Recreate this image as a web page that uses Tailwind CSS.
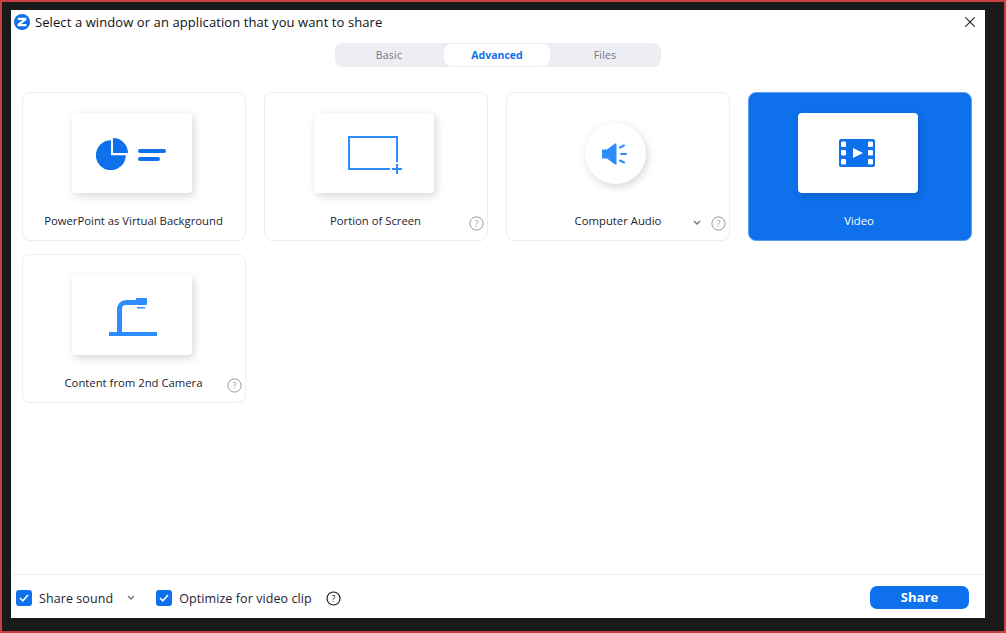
<!DOCTYPE html>
<html lang="en">
<head>
    <meta charset="UTF-8">
    <title>Share</title>
    <script src="https://cdn.jsdelivr.net/npm/@tailwindcss/browser@4"></script>
</head>
<body class="w-[1006px] h-[633px] overflow-hidden bg-[#1a1a1a] border-2 border-[#c94040] font-['Open_Sans','Noto_Sans',sans-serif] text-[#232333]">
    <!-- Window -->
    <div class="ml-[9px] mt-2 w-[974px] h-[608px] bg-white flex flex-col">
        <!-- Title bar -->
        <header class="h-[33px] pl-[3px] pr-[10px] flex items-start">
            <svg class="w-4 h-4 mt-1 shrink-0" viewBox="0 0 16 16">
                <circle cx="8" cy="8" r="8" fill="#0e71eb"/>
                <path d="M3.800 3.800h8.600v2.200L7.200 10.100h5.200v2.200H3.600v-2.200L8.800 6H3.800z" fill="#fff"/>
            </svg>
            <h1 class="ml-[5px] mt-[3px] text-[13px] leading-[18px] tracking-[0.09px] text-[#111]">Select a window or an application that you want to share</h1>
            <svg class="ml-auto mt-[7px] w-[10px] h-[10px]" viewBox="0 0 10 10" fill="none" stroke="#222" stroke-width="1.100">
                <path d="M.3.3l9.400 9.400M9.700.3L.3 9.700"/>
            </svg>
        </header>

        <!-- Tabs -->
        <div class="ml-[324px] w-[326px] h-6 bg-[#edeef3] rounded-lg p-px flex text-[10.5px] text-[#747487]">
            <button class="w-[108px] pt-[2px] pr-[2px] text-center tracking-[0.2px]">Basic</button>
            <button class="w-[106px] pt-[2px] bg-white rounded-lg text-[#0e71eb] font-bold text-center">Advanced</button>
            <button class="flex-1 pt-[2px] text-center tracking-[0.2px]">Files</button>
        </div>

        <!-- Options -->
        <main class="flex-1 pl-[11px] pt-[25px]">
            <div class="grid grid-cols-[224px_224px_224px_224px] auto-rows-[149px] gap-x-[18px] gap-y-[13px] text-[11.3px]">
                <div class="relative border border-[#ededf4] rounded-[8px] flex flex-col items-center pt-5">
                    <div class="mr-1 w-[120px] h-20 bg-white rounded-[4px] shadow-[2px_3px_9px_rgba(0,0,0,0.16)] flex items-center justify-center">
                        <svg class="mt-[2px] w-[72px] h-8" viewBox="0 0 72 32">
                            <path d="M15 2.200v15h14.800A15 15 0 1 1 15 2.200z" fill="#0e71eb"/>
                            <path d="M17 0a15 15 0 0 1 15 15H17z" fill="#0e71eb"/>
                            <rect x="42" y="11" width="28" height="4" rx="2" fill="#0e71eb"/>
                            <rect x="42" y="19" width="22" height="4" rx="2" fill="#0e71eb"/>
                        </svg>
                    </div>
                    <span class="mt-5 mr-px">PowerPoint as Virtual Background</span>
                </div>

                <div class="relative border border-[#ededf4] rounded-[8px] flex flex-col items-center pt-5">
                    <div class="mr-1 w-[120px] h-20 bg-white rounded-[4px] shadow-[2px_3px_9px_rgba(0,0,0,0.16)] flex items-center justify-center">
                        <svg class="w-[56px] h-[42px]" viewBox="0 0 56 42" fill="none" stroke="#2d8cff" stroke-width="2">
                            <path d="M51 30V5H3v32H44"/>
                            <path d="M51 32v10M46 37h10"/>
                        </svg>
                    </div>
                    <span class="mt-5 mr-px">Portion of Screen</span>
                    <svg class="absolute right-[3.500px] bottom-[9px] w-[15px] h-[15px]" viewBox="0 0 15 15">
                        <circle cx="7.500" cy="7.500" r="6.600" fill="none" stroke="#98989f" stroke-width="1"/>
                        <text x="7.500" y="10.800" text-anchor="middle" font-size="9" fill="#98989f">?</text>
                    </svg>
                </div>

                <div class="relative border border-[#ededf4] rounded-[8px] flex flex-col items-center pt-[30px]">
                    <div class="mr-[5px] w-[61px] h-[61px] bg-white rounded-full shadow-[2px_3px_9px_rgba(0,0,0,0.16)] flex items-center justify-center">
                        <svg class="-ml-[2px] w-[28px] h-[22px]" viewBox="0 0 28 22" fill="none">
                            <path d="M1 6.500h5L14 .5h1.500v21H14l-8-6H1z" fill="#2d8cff"/>
                            <path d="M19 4.500l4-2M20 11h5M19 17.500l4 2" stroke="#2d8cff" stroke-width="2" stroke-linecap="round"/>
                        </svg>
                    </div>
                    <span class="mt-[29px]">Computer Audio</span>
                    <svg class="absolute right-[28px] bottom-[14px] w-[8px] h-[6px]" viewBox="0 0 8 6" fill="none" stroke="#6e7680" stroke-width="1.400">
                        <path d="M1 1l3 3 3-3"/>
                    </svg>
                    <svg class="absolute right-[3.500px] bottom-[9px] w-[15px] h-[15px]" viewBox="0 0 15 15">
                        <circle cx="7.500" cy="7.500" r="6.600" fill="none" stroke="#98989f" stroke-width="1"/>
                        <text x="7.500" y="10.800" text-anchor="middle" font-size="9" fill="#98989f">?</text>
                    </svg>
                </div>

                <div class="relative bg-[#0e71eb] border border-[#5a9ff2] rounded-[8px] flex flex-col items-center pt-5 text-white">
                    <div class="mr-1 w-[120px] h-20 bg-white rounded-[4px] shadow-[2px_3px_9px_rgba(0,0,0,0.16)] flex items-center justify-center">
                        <svg class="-ml-[2px] w-9 h-[28px]" viewBox="0 0 36 28">
                            <rect width="36" height="28" rx="2" fill="#0e71eb"/>
                            <g fill="#fff">
                                <rect x="2" y="2.500" width="5" height="5.500" rx="1"/>
                                <rect x="2" y="11" width="5" height="5.500" rx="1"/>
                                <rect x="2" y="20" width="5" height="5.500" rx="1"/>
                                <rect x="29" y="2.500" width="5" height="5.500" rx="1"/>
                                <rect x="29" y="11" width="5" height="5.500" rx="1"/>
                                <rect x="29" y="20" width="5" height="5.500" rx="1"/>
                                <path d="M14 9l10 5-10 5z"/>
                            </g>
                        </svg>
                    </div>
                    <span class="mt-5 mr-[2px]">Video</span>
                </div>

                <div class="relative border border-[#ededf4] rounded-[8px] flex flex-col items-center pt-5">
                    <div class="mr-1 w-[120px] h-20 bg-white rounded-[4px] shadow-[2px_3px_9px_rgba(0,0,0,0.16)] flex items-center justify-center">
                        <svg class="ml-[2px] mt-1 w-12 h-[38px]" viewBox="0 0 48 38" fill="#2d8cff">
                            <rect y="34" width="48" height="4"/>
                            <path d="M8 34V11a9 9 0 0 1 9-9h10v5H17a4 4 0 0 0-4 4v23z"/>
                            <rect x="27" y="0" width="11" height="7" rx="1"/>
                            <rect x="28" y="9" width="8" height="1.500"/>
                        </svg>
                    </div>
                    <span class="mt-5 mr-px">Content from 2nd Camera</span>
                    <svg class="absolute right-[3.500px] bottom-[9px] w-[15px] h-[15px]" viewBox="0 0 15 15">
                        <circle cx="7.500" cy="7.500" r="6.600" fill="none" stroke="#98989f" stroke-width="1"/>
                        <text x="7.500" y="10.800" text-anchor="middle" font-size="9" fill="#98989f">?</text>
                    </svg>
                </div>
            </div>
        </main>

        <!-- Footer -->
        <footer class="h-11 border-t border-[#ededf4] pt-[3px] pl-[5px] pr-4 flex items-center text-[12.5px] tracking-[0.08px]">
            <span class="w-4 h-4 bg-[#0e71eb] rounded-[3px] flex items-center justify-center">
                <svg class="w-[10px] h-[8px]" viewBox="0 0 10 8" fill="none" stroke="#fff" stroke-width="1.500"><path d="M1 4l2.800 2.800L9 1"/></svg>
            </span>
            <span class="ml-[7px] pt-[2px]">Share sound</span>
            <svg class="ml-[14px] w-[8px] h-[6px]" viewBox="0 0 8 6" fill="none" stroke="#6e7680" stroke-width="1.400"><path d="M1 1l3 3 3-3"/></svg>
            <span class="ml-[21px] w-4 h-4 bg-[#0e71eb] rounded-[3px] flex items-center justify-center">
                <svg class="w-[10px] h-[8px]" viewBox="0 0 10 8" fill="none" stroke="#fff" stroke-width="1.500"><path d="M1 4l2.800 2.800L9 1"/></svg>
            </span>
            <span class="ml-[7px] pt-[2px]">Optimize for video clip</span>
            <svg class="ml-[14px] w-[15px] h-[15px]" viewBox="0 0 15 15">
                <circle cx="7.500" cy="7.500" r="6.500" fill="none" stroke="#222" stroke-width="1.200"/>
                <text x="7.500" y="10.800" text-anchor="middle" font-size="9" fill="#222">?</text>
            </svg>
            <button class="ml-auto -mt-px w-[99px] h-[23px] bg-[#0e71eb] rounded-[7px] text-white font-bold text-[13px]">Share</button>
        </footer>
    </div>
</body>
</html>
